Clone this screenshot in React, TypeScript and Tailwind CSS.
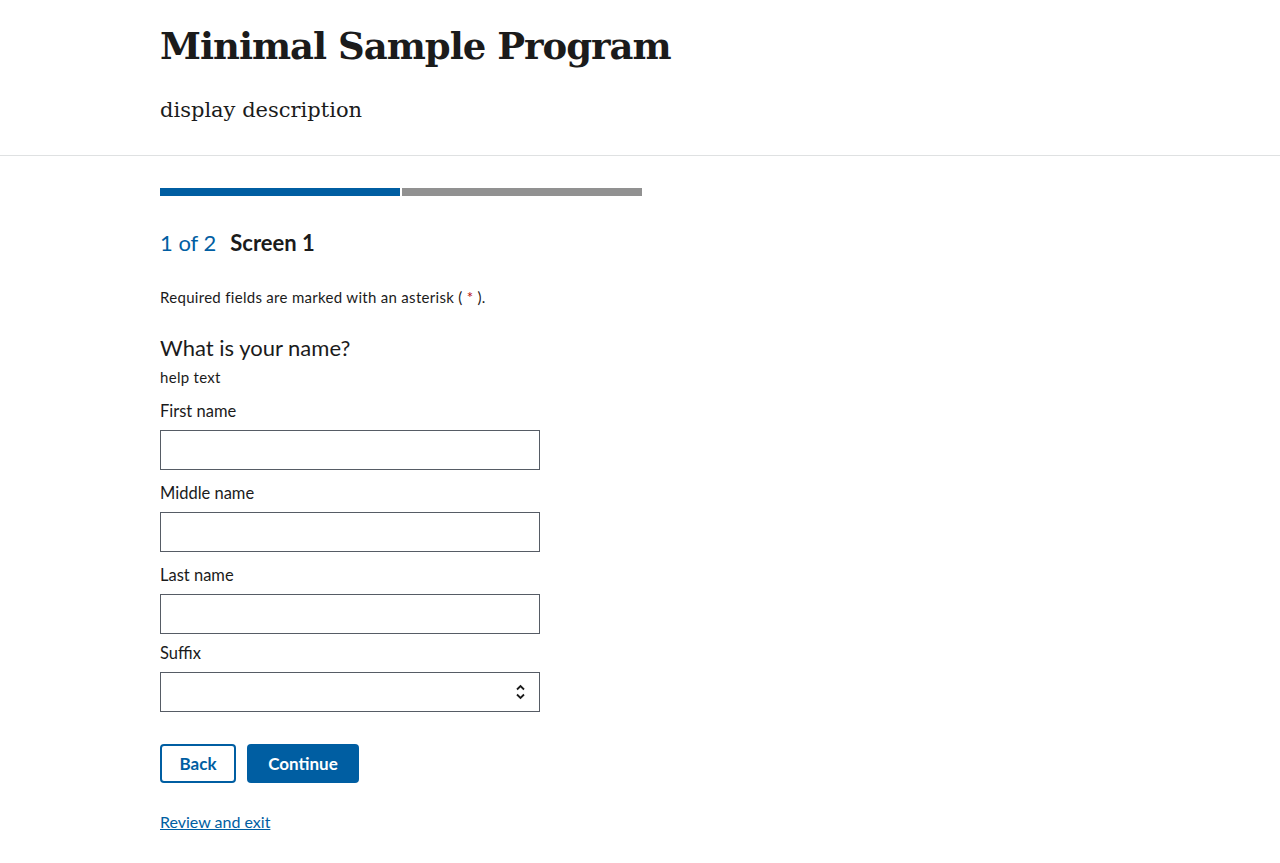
const sans = "font-['Lato','Noto_Sans',sans-serif]"
const serif = "font-['DejaVu_Serif','Liberation_Serif',serif]"

function TextField({ label, className }: { label: string; className: string }) {
  return (
    <div className={className}>
      <label className="block text-[16.5px] leading-[22px] text-[#1b1b1b]">{label}</label>
      <input
        type="text"
        className="mt-2 block h-10 w-[380px] border border-[#565c65] bg-white px-2 text-[17px] outline-none"
      />
    </div>
  )
}

export default function App() {
  return (
    <div className={`${sans} min-h-screen bg-white text-[#1b1b1b]`}>
      <header className="border-b border-[#dfe1e2]">
        <div className="mx-auto w-[960px] pb-[31px] pt-[18px]">
          <h1 className={`${serif} text-[37px] font-bold leading-[56px] tracking-[-1px]`}>
            Minimal Sample Program
          </h1>
          <p className={`${serif} mt-[22px] text-[21px] leading-[28px]`}>display description</p>
        </div>
      </header>

      <main className="mx-auto w-[960px] pt-[32px]">
        <div className="flex w-[482px] gap-[2px]">
          <div className="h-2 flex-1 bg-[#005ea2]" />
          <div className="h-2 flex-1 bg-[#919191]" />
        </div>

        <h2 className="mt-[32px] flex items-baseline gap-[14px] text-[22px] leading-[30px]">
          <span className="text-[#005ea2]">1 of 2</span>
          <span className="font-bold">Screen 1</span>
        </h2>

        <p className="mt-[29px] text-[15px] leading-[20px] tracking-[0.3px]">
          Required fields are marked with an asterisk ( <span className="text-[#b50909]">*</span> ).
        </p>

        <fieldset className="mt-[27px]">
          <legend className="text-[22px] leading-[28px]">What is your name?</legend>
          <div className="mt-[5px] text-[15px] leading-[20px] tracking-[0.3px]">help text</div>
          <TextField label="First name" className="mt-[13px]" />
          <TextField label="Middle name" className="mt-3" />
          <TextField label="Last name" className="mt-3" />
          <div className="mt-2">
            <label className="block text-[16.5px] leading-[22px]">Suffix</label>
            <div className="relative mt-2 h-10 w-[380px] border border-[#565c65]">
              <select className="h-full w-full appearance-none bg-transparent px-2 outline-none">
                <option value=""></option>
              </select>
              <svg
                className="pointer-events-none absolute right-[14px] top-[11px]"
                width="9"
                height="16"
                viewBox="0 0 9 16"
                fill="none"
                stroke="#1b1b1b"
                strokeWidth="1.8"
              >
                <path d="M1 5.5 L4.5 2 L8 5.5" />
                <path d="M1 10.5 L4.5 14 L8 10.5" />
              </svg>
            </div>
          </div>
        </fieldset>

        <div className="mt-8 flex gap-[11px]">
          <button className="h-[39px] w-[76px] rounded-[4px] border-2 border-[#005ea2] text-[17px] font-bold text-[#005ea2]">
            Back
          </button>
          <button className="h-[39px] w-[112px] rounded-[4px] bg-[#005ea2] text-[17px] font-bold text-white">
            Continue
          </button>
        </div>

        <a href="#" className="mt-[28px] inline-block text-[16px] leading-[22px] text-[#005ea2] underline">
          Review and exit
        </a>
      </main>
    </div>
  )
}
